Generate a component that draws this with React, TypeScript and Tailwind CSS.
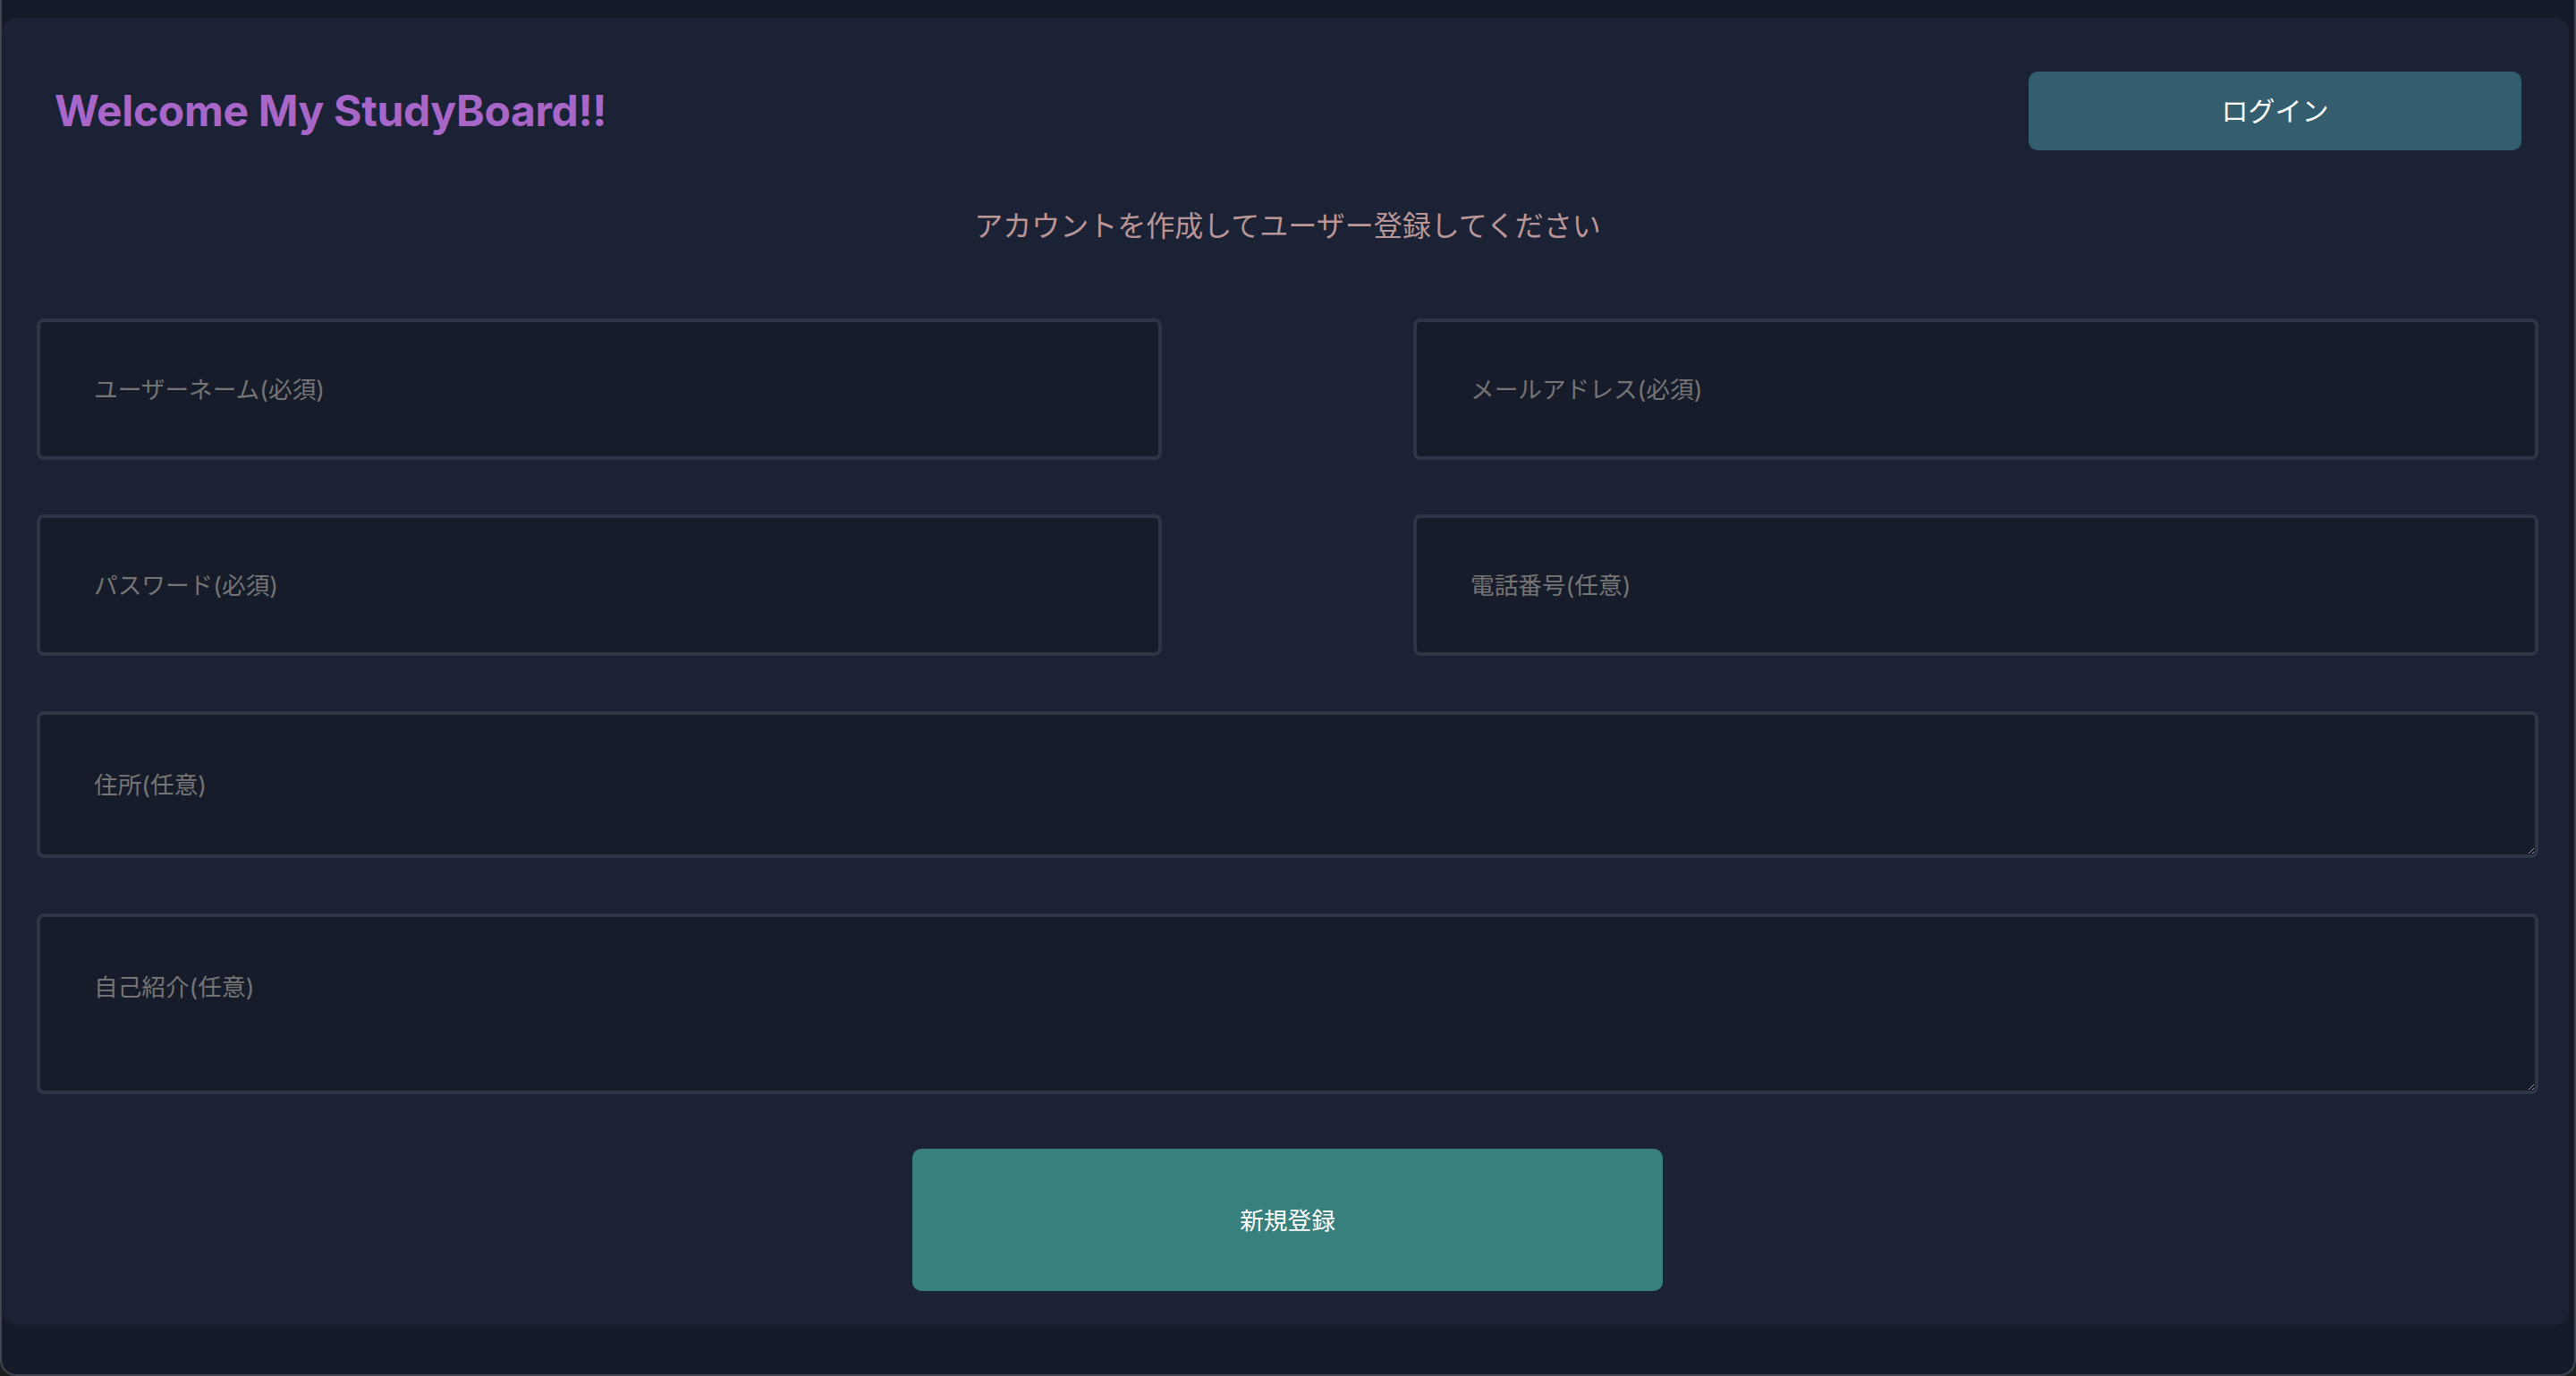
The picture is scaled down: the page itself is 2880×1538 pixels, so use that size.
import React from "react";

const font = "font-['Inter','Noto_Sans_CJK_JP',sans-serif]";

export default function App() {
    return (
        <div className={`w-[2880px] h-[1538px] bg-[#1b2120] ${font}`}>
            {/* window frame */}
            <div className="h-full bg-[#161b2a] border-x-2 border-b-2 border-[#40454f] rounded-b-[18px] pt-[20px] pl-[1px] pr-[6px] overflow-hidden">
                <div className="bg-[#1b2235] rounded-[16px] h-[1461px] pl-[38px] pr-[34px] pt-[60px] flex flex-col">
                    <div className="flex items-center justify-between pl-[20px] pr-[19px]">
                        <h1 className="text-[48px] leading-[56px] font-bold tracking-[-0.35px] text-[#a966c9]">Welcome My StudyBoard!!</h1>
                        <button className="w-[551px] h-[88px] rounded-[10px] bg-[#345e6e] text-white text-[30px]">
                            ログイン
                        </button>
                    </div>

                    <p className="mt-[61px] text-center text-[32px] leading-[48px] text-[#ba9696]">
                        アカウントを作成してユーザー登録してください
                    </p>

                    <div className="mt-[79px] flex justify-between">
                        <input
                            className="w-[1258px] h-[158px] border-4 border-[#2e3547] bg-[#171c2b] rounded-[8px] px-[60px] text-[26.67px] text-white placeholder:text-[#757575] outline-none"
                            placeholder="ユーザーネーム(必須)"
                        />
                        <input
                            className="w-[1258px] h-[158px] border-4 border-[#2e3547] bg-[#171c2b] rounded-[8px] px-[60px] text-[26.67px] text-white placeholder:text-[#757575] outline-none"
                            placeholder="メールアドレス(必須)"
                        />
                    </div>

                    <div className="mt-[61px] flex justify-between">
                        <input
                            type="password"
                            className="w-[1258px] h-[158px] border-4 border-[#2e3547] bg-[#171c2b] rounded-[8px] px-[60px] text-[26.67px] text-white placeholder:text-[#757575] outline-none"
                            placeholder="パスワード(必須)"
                        />
                        <input
                            className="w-[1258px] h-[158px] border-4 border-[#2e3547] bg-[#171c2b] rounded-[8px] px-[60px] text-[26.67px] text-white placeholder:text-[#757575] outline-none"
                            placeholder="電話番号(任意)"
                        />
                    </div>

                    <textarea
                        className="mt-[62px] w-full h-[164px] border-4 border-[#2e3547] bg-[#171c2b] rounded-[8px] pt-[58px] px-[60px] text-[26.67px] text-white placeholder:text-[#757575] outline-none"
                        placeholder="住所(任意)"
                    />
                    <textarea
                        className="mt-[62px] w-full h-[202px] border-4 border-[#2e3547] bg-[#171c2b] rounded-[8px] pt-[58px] px-[60px] text-[26.67px] text-white placeholder:text-[#757575] outline-none"
                        placeholder="自己紹介(任意)"
                    />

                    <button className="mt-[61px] mx-auto w-[839px] h-[159px] rounded-[10px] bg-[#38807e] text-white text-[26.67px]">
                        新規登録
                    </button>
                </div>
            </div>
        </div>
    );
}
